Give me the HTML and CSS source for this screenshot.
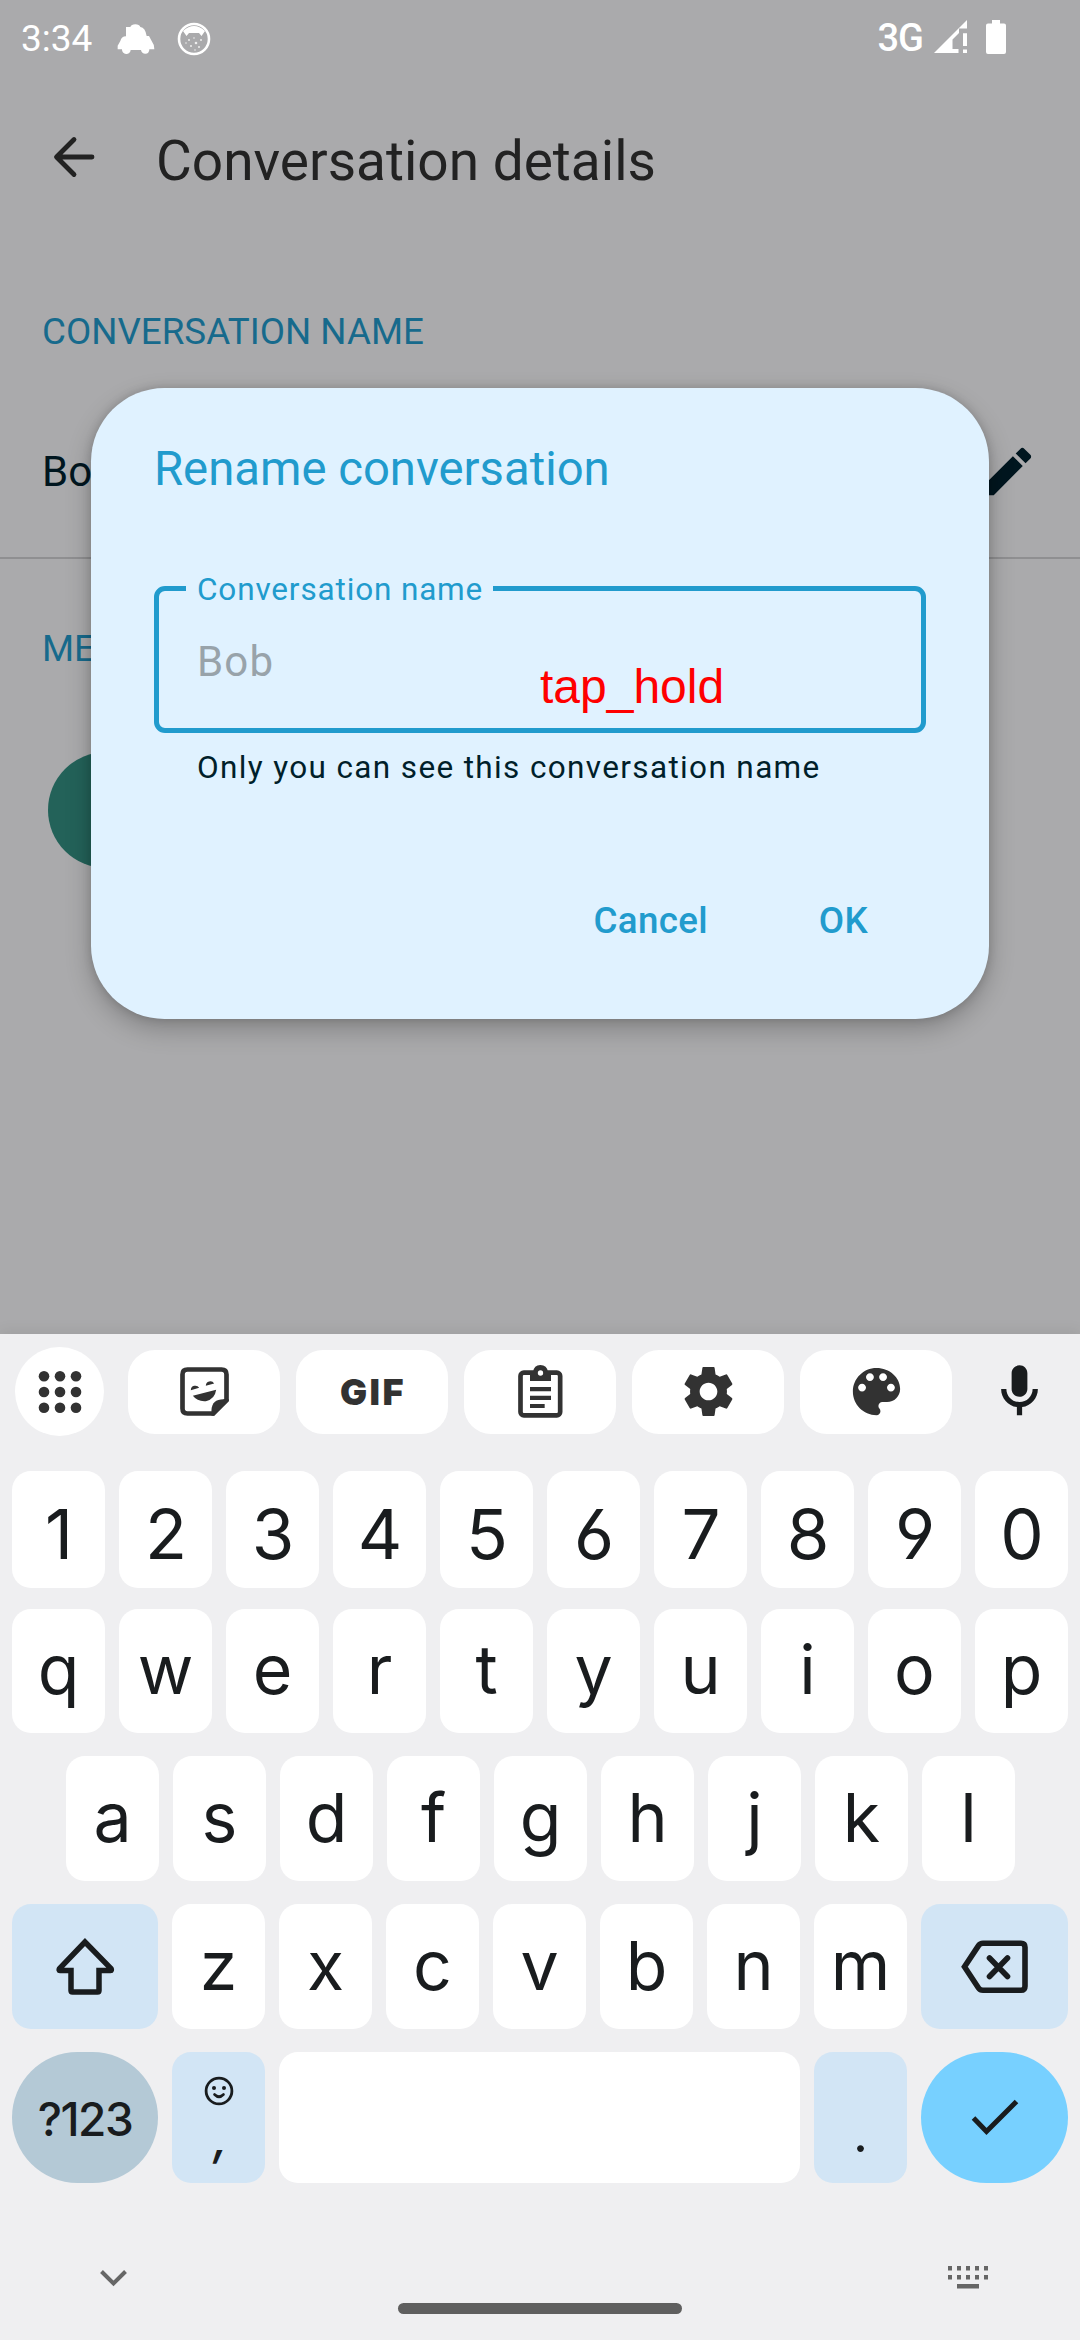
FILE: index.html
```html
<!DOCTYPE html>
<html lang="en">
<head>
<meta charset="utf-8">
<title>Conversation details</title>
<link rel="stylesheet" href="styles.css">
</head>
<body>
<div class="phone">
  <main class="app">
    <header class="status">
      <span class="clock">3:34</span>
      <svg class="car" width="38" height="31" viewBox="51 39 114 93"><path fill="#fff" d="M78 48H91Q94 40 106 40Q118 40 121 48Q136 50 140 75H147L155 90Q163 100 163 115H148A12.500 12.500 0 0 1 123 117H92A13 13 0 0 1 66 115H53V104L61 90Q64 76 78 76Z"/></svg>
      <svg class="cat" width="34" height="34" viewBox="0 0 34 34"><circle cx="17" cy="17" r="15" fill="none" stroke="#fff" stroke-width="2.600"/><path fill="#fff" d="M6 9Q17-1 28 9L24.500 14L22 11H12L9.500 14Z"/><g fill="#fff" opacity=".8"><circle cx="12" cy="18" r="1"/><circle cx="19" cy="21" r="1.300"/><circle cx="24" cy="18" r="1"/><circle cx="14" cy="24" r="1"/><circle cx="22" cy="25" r="1"/><circle cx="17" cy="16" r=".8"/><circle cx="9" cy="21" r=".8"/><circle cx="18" cy="28" r=".8"/></g></svg>
      <span class="network">3G</span>
      <svg class="signal" width="33" height="33" viewBox="934 20 33 33"><path fill="#fff" d="M934 53L967 20V28.500H959V33L952.500 39.500V49H958.500V53ZM963 33.300H967V46H963ZM963 49.500H967V53H963Z"/></svg>
      <svg class="battery" width="20" height="34" viewBox="0 0 20 34"><path fill="#fff" d="M6 0H14V3.500H18Q20 3.500 20 5.500V32Q20 34 18 34H2Q0 34 0 32V5.500Q0 3.500 2 3.500H6Z"/></svg>
    </header>
    <div class="appbar">
      <svg class="back" width="44" height="44" viewBox="0 0 44 44"><path d="M40 22H5M22 4.500L4.500 22L22 39.500" fill="none" stroke="#222" stroke-width="4.800" stroke-linecap="round" stroke-linejoin="round"/></svg>
      <h1 class="page-title">Conversation details</h1>
    </div>
    <h2 class="section">CONVERSATION NAME</h2>
    <div class="name-row">
      <span>Bob</span>
      <svg width="63" height="63" viewBox="0 0 24 24"><path fill="#00161f" d="M3 17.250V21h3.750L17.810 9.940l-3.750-3.750L3 17.250zM20.710 7.040c.39-.39.39-1.020 0-1.410l-2.340-2.340c-.39-.39-1.020-.39-1.410 0l-1.830 1.830 3.750 3.750 1.830-1.830z"/></svg>
    </div>
    <h2 class="section members">ME</h2>
    <div class="avatar"></div>

    <section class="dialog">
      <h3 class="dialog-title">Rename conversation</h3>
      <div class="field">
        <span class="field-label">Conversation name</span>
        <span class="placeholder">Bob</span>
        <span class="gesture">tap_hold</span>
      </div>
      <p class="helper">Only you can see this conversation name</p>
      <div class="actions"><span>Cancel</span><span>OK</span></div>
    </section>
  </main>

  <section class="keyboard">
    <div class="toolbar">
      <div class="tool round"><svg width="44" height="44" viewBox="0 0 44 44" fill="#323232"><circle cx="6" cy="6.200" r="5.300"/><circle cx="22" cy="6.200" r="5.300"/><circle cx="38" cy="6.200" r="5.300"/><circle cx="6" cy="22" r="5.300"/><circle cx="22" cy="22" r="5.300"/><circle cx="38" cy="22" r="5.300"/><circle cx="6" cy="37.800" r="5.300"/><circle cx="22" cy="37.800" r="5.300"/><circle cx="38" cy="37.800" r="5.300"/></svg></div>
      <div class="tool"><svg width="49" height="49" viewBox="57.500 50.500 147 147" fill="#323232"><path d="M80 58H182Q197 58 197 73V149L157 190H80Q65 190 65 175V73Q65 58 80 58Z" fill="none" stroke="#323232" stroke-width="14"/><path d="M204 147V153L160 197H152V180Q153 147 188 147Z"/><path d="M90 120A13.500 13.500 0 0 1 115 113ZM135 107A13.500 13.500 0 0 1 160 100ZM96 137L166 119Q162 148 135 153Q110 155 96 137Z"/></svg></div>
      <div class="tool gif">GIF</div>
      <div class="tool"><svg width="45" height="53" viewBox="1071 45 135 159" fill="#323232"><rect x="1078.500" y="68" width="119" height="128" rx="10" fill="none" stroke="#323232" stroke-width="14"/><path d="M1107 93V66H1116Q1119 45 1138 45Q1158 45 1161 66H1170V93Z"/><circle cx="1138.500" cy="69" r="8" fill="#fff"/><path d="M1107 111H1170V124H1107ZM1107 137H1170V150H1107ZM1107 162H1151V174H1107Z"/></svg></div>
      <div class="tool"><svg width="59" height="59" viewBox="0 0 24 24"><path fill="#323232" d="M19.430 12.980c.04-.32.07-.64.07-.98s-.03-.66-.07-.98l2.110-1.650c.19-.15.24-.42.12-.64l-2-3.460c-.12-.22-.39-.3-.61-.22l-2.490 1c-.52-.4-1.080-.73-1.690-.98l-.38-2.650C14.460 2.180 14.250 2 14 2h-4c-.25 0-.46.18-.49.42l-.38 2.650c-.61.25-1.170.59-1.690.98l-2.490-1c-.23-.09-.49 0-.61.22l-2 3.460c-.13.22-.07.49.12.64l2.110 1.650c-.04.32-.07.65-.07.98s.03.66.07.98l-2.110 1.650c-.19.15-.24.42-.12.64l2 3.460c.12.22.39.3.61.22l2.490-1c.52.4 1.080.73 1.690.98l.38 2.650c.03.24.24.42.49.42h4c.25 0 .46-.18.49-.42l.38-2.650c.61-.25 1.170-.59 1.690-.98l2.490 1c.23.09.49 0 .61-.22l2-3.460c.12-.22.07-.49-.12-.64l-2.110-1.650zM12 15.600c-1.980 0-3.600-1.620-3.600-3.600s1.620-3.600 3.600-3.600 3.600 1.620 3.600 3.600-1.620 3.600-3.600 3.600z"/></svg></div>
      <div class="tool"><svg width="63" height="63" viewBox="0 0 24 24"><path fill="#323232" d="M12 3c-4.970 0-9 4.030-9 9s4.030 9 9 9c.83 0 1.500-.67 1.500-1.500 0-.39-.15-.74-.39-1.010-.23-.26-.38-.61-.38-.99 0-.83.67-1.500 1.500-1.500H16c2.760 0 5-2.240 5-5 0-4.420-4.030-8-9-8zm-5.500 9c-.83 0-1.500-.67-1.500-1.500S5.670 9 6.500 9 8 9.670 8 10.500 7.330 12 6.500 12zm3-4C8.670 8 8 7.330 8 6.500S8.670 5 9.500 5s1.500.67 1.500 1.500S10.330 8 9.500 8zm5 0c-.83 0-1.500-.67-1.500-1.500S13.670 5 14.500 5s1.500.67 1.500 1.500S15.330 8 14.500 8zm3 4c-.83 0-1.500-.67-1.500-1.500S16.670 9 17.500 9s1.500.67 1.500 1.500-.67 1.500-1.500 1.500z"/></svg></div>
      <div class="mic"><svg width="63" height="63" viewBox="0 0 24 24"><path fill="#191c1e" d="M12 14c1.660 0 3-1.340 3-3V5c0-1.660-1.340-3-3-3S9 3.340 9 5v6c0 1.660 1.340 3 3 3zM17 11c0 2.760-2.240 5-5 5s-5-2.240-5-5H5c0 3.530 2.610 6.430 6 6.920V21h2v-3.080c3.390-.49 6-3.390 6-6.920h-2z"/></svg></div>
    </div>
    <div class="row digits"><b>1</b><b>2</b><b>3</b><b>4</b><b>5</b><b>6</b><b>7</b><b>8</b><b>9</b><b>0</b></div>
    <div class="row top"><b>q</b><b>w</b><b>e</b><b>r</b><b>t</b><b>y</b><b>u</b><b>i</b><b>o</b><b>p</b></div>
    <div class="row home"><b>a</b><b>s</b><b>d</b><b>f</b><b>g</b><b>h</b><b>j</b><b>k</b><b>l</b></div>
    <div class="row lower">
      <b class="soft wide"><svg width="60" height="58" viewBox="55 1937 60 58"><path d="M85 1941L59.500 1967.500Q58.500 1969.500 60 1969.500H71V1989.500Q71 1991 72.500 1991H97.500Q99 1991 99 1989.500V1969.500H110.500Q112 1969.500 111 1967.500Z" fill="none" stroke="#191c1e" stroke-width="5.500" stroke-linejoin="miter"/></svg></b>
      <b>z</b><b>x</b><b>c</b><b>v</b><b>b</b><b>n</b><b>m</b>
      <b class="soft wide end"><svg width="68" height="55" viewBox="960 1941 68 55"><path d="M982 1945.300H1020Q1024 1945.300 1024 1949.300V1988.300Q1024 1992.300 1020 1992.300H982Q979 1992.300 977.500 1990L963.500 1968.800L977.500 1947.600Q979 1945.300 982 1945.300Z" fill="none" stroke="#191c1e" stroke-width="5.600"/><path d="M988.500 1960L1006.500 1978.500M1006.500 1960L988.500 1978.500" stroke="#191c1e" stroke-width="5.600" stroke-linecap="round"/></svg></b>
    </div>
    <div class="row bottom">
      <b class="symbols wide">?123</b>
      <b class="soft comma"><svg width="30" height="30" viewBox="0 0 30 30"><circle cx="15" cy="15" r="12.900" fill="none" stroke="#191c1e" stroke-width="2.800"/><circle cx="10" cy="12" r="2" fill="#191c1e"/><circle cx="20" cy="12" r="2" fill="#191c1e"/><path d="M10.500 18.500Q15 23 19.500 18.500" fill="none" stroke="#191c1e" stroke-width="2.600" stroke-linecap="round"/></svg><span>,</span></b>
      <b class="space"></b>
      <b class="soft period"><span>.</span></b>
      <b class="enter wide end"><svg width="48" height="38" viewBox="971 2100 48 38"><path d="M973.500 2119L986.500 2132.500L1016.500 2102.500" fill="none" stroke="#191c1e" stroke-width="5"/></svg></b>
    </div>
    <footer class="nav">
      <svg class="hide" width="27" height="17" viewBox="0 0 27 17"><path d="M1.500 1.500L13.500 13.500L25.500 1.500" fill="none" stroke="#666" stroke-width="4"/></svg>
      <div class="handle"></div>
      <svg class="switch" width="40" height="23" viewBox="0 0 40 23"><path fill="#666" d="M0 0h4v4.500h-4zM9 0h4v4.500h-4zM18 0h4v4.500h-4zM27 0h4v4.500h-4zM36 0h4v4.500h-4zM0 9h4v4.500h-4zM9 9h4v4.500h-4zM18 9h4v4.500h-4zM27 9h4v4.500h-4zM36 9h4v4.500h-4zM9 18h22v4.500h-22z"/></svg>
    </footer>
  </section>
</div>
</body>
</html>
```
FILE: styles.css
```css
* { box-sizing: border-box; margin: 0; padding: 0; }
body { width: 1080px; height: 2340px; overflow: hidden; font-family: Roboto, sans-serif; }
svg { display: block; flex: none; }
.phone { width: 1080px; height: 2340px; display: flex; flex-direction: column; }

/* dimmed application behind the dialog */
.app { position: relative; height: 1334px; background: #aaaaac; }
.status { height: 78px; padding: 0 74px 0 21px; display: flex; align-items: center; color: #fff; }
.clock { font-size: 37px; line-height: 78px; width: 96px; }
.cat { margin-left: 22px; margin-top: -1px; }
.network { margin-left: auto; font-size: 38px; font-weight: 500; line-height: 74px; letter-spacing: -1px; padding-bottom: 3px; }
.signal { margin-left: 11px; margin-top: -5px; }
.battery { margin-left: 19px; margin-top: -5px; }
.appbar { height: 166px; padding-left: 52px; display: flex; align-items: center; }
.back { margin-top: -8px; }
.page-title { margin-left: 60px; font-size: 55px; font-weight: 400; color: #222; }
.section { margin-top: 66px; padding-left: 42px; font-size: 36.75px; font-weight: 400; line-height: 44px; color: #176a8c; }
.name-row { margin-top: 31px; height: 174px; padding: 0 41px; display: flex; align-items: center; justify-content: space-between; border-bottom: 2px solid #8f8f91; font-size: 42px; color: #00161f; }
.name-row span { padding-left: 1px; }
.section.members { margin-top: 68px; }
.avatar { margin: 81px 0 0 48px; width: 116px; height: 116px; border-radius: 50%; background: #236259; }

.dialog { position: absolute; left: 91px; top: 388px; width: 898px; height: 631px; padding: 51px 63px 0; border-radius: 73.5px; background: #e0f2ff; box-shadow: 0 10px 26px rgba(0,0,0,.24), 0 0 10px rgba(0,0,0,.16); }
.dialog-title { font-size: 47.25px; font-weight: 400; line-height: 60px; color: #219bcd; }
.field { position: relative; margin-top: 87px; height: 147px; border: 5px solid #219bcd; border-radius: 11px; }
.field-label { position: absolute; left: 27px; top: -13px; padding: 0 10px 0 11px; background: #e0f2ff; font-size: 31.5px; line-height: 24px; letter-spacing: .85px; color: #219bcd; white-space: nowrap; }
.placeholder { display: block; padding-left: 38px; font-size: 42px; line-height: 142px; letter-spacing: 1.2px; color: #98a3aa; }
.gesture { position: absolute; left: 381px; top: 69px; font: 48px/54px "Liberation Sans", sans-serif; color: #f00; }
.helper { margin-top: 15px; padding-left: 43px; font-size: 31.5px; line-height: 40px; letter-spacing: 1.36px; color: #001f2a; }
.actions { margin-top: 108px; padding-right: 58px; display: flex; justify-content: flex-end; gap: 111px; font-size: 36.75px; font-weight: 500; line-height: 50px; letter-spacing: .3px; color: #219bcd; }

/* on-screen keyboard */
.keyboard { position: relative; height: 1006px; padding: 13px 12px 0; background: #efeff1; box-shadow: 0 -2px 14px rgba(0,0,0,.08); color: #191c1e; }
.toolbar { height: 89px; padding-left: 3px; display: flex; align-items: center; gap: 16px; }
.tool { width: 152px; height: 84px; border-radius: 27px; background: #fff; display: flex; align-items: center; justify-content: center; }
.tool.round { width: 89px; height: 89px; border-radius: 50%; margin-right: 8px; }
.gif { padding-left: 2px; font: 900 36px Inter, sans-serif; letter-spacing: 2.5px; color: #323232; }
.mic { margin-left: 20px; }
.row { display: flex; gap: 14px; font: 68px/1 Inter, sans-serif; }
.row b { flex: none; width: 93px; height: 100%; display: flex; align-items: center; justify-content: center; border-radius: 19px; background: #fff; font-weight: 400; padding-bottom: 4px; }
.row.digits { height: 117px; margin-top: 35px; font-size: 69px; font-feature-settings: "cv03", "cv04"; }
.digits b { padding: 9px 0 0 1px; }
.row.top { height: 124px; margin-top: 21px; }
.row.home { height: 125px; margin-top: 23px; padding-left: 54px; }
.row.lower { height: 125px; margin-top: 23px; }
.row.bottom { height: 131px; margin-top: 23px; }
.row b.wide { width: 146px; padding-bottom: 0; }
.row b.wide.end { width: 147px; }
.row b.soft { background: #d2e5f5; }
.row b.symbols { background: #b4c9d6; border-radius: 66px; font-size: 46px; font-weight: 500; letter-spacing: -1.5px; padding: 2px 0 0; }
.row b.comma { flex-direction: column; justify-content: flex-start; padding-top: 24px; }
.comma span { margin-top: 8px; padding-left: 4px; font: italic 500 48px/48px Inter, sans-serif; }
.row b.space { width: 521px; }
.row b.period { align-items: flex-start; padding-top: 56px; }
.period span { font-size: 52px; line-height: 52px; }
.row b.enter { background: #77d0ff; border-radius: 66px; }
.nav { height: 157px; display: flex; justify-content: space-between; align-items: flex-start; padding: 0 80px 0 88px; }
.hide { margin-top: 87px; }
.handle { width: 284px; height: 11px; margin: 120px 0 0 5px; border-radius: 6px; background: #5f5f5f; }
.switch { margin-top: 83px; }
```
